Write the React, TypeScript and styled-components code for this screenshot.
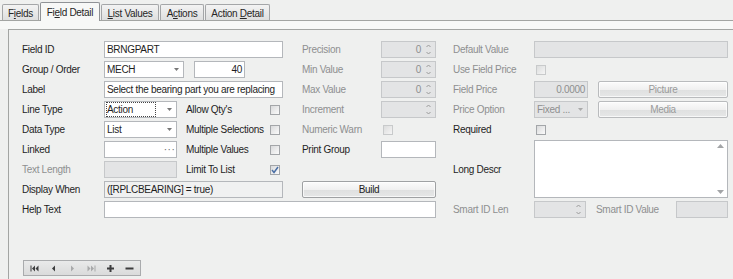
import styled, { createGlobalStyle } from "styled-components";

const GlobalStyle = createGlobalStyle`
  html, body { margin: 0; padding: 0; }
  body {
    background: #eff0ef;
    font-family: "Liberation Sans", Arial, sans-serif;
    font-size: 10px;
    letter-spacing: -0.3px;
    color: #1e1e1e;
  }
`;

const Window = styled.div`
  width: 733px;
  height: 279px;
  overflow: hidden;
  display: flex;
  flex-direction: column;
`;

const TabBar = styled.div`
  height: 20px;
  flex: none;
  border-bottom: 1px solid #a2a4a2;
  display: flex;
  align-items: flex-end;
  padding-left: 2px;
  gap: 1px;
`;

const Tab = styled.div<{ $active?: boolean; $w: number }>`
  box-sizing: border-box;
  width: ${(p) => p.$w}px;
  height: ${(p) => (p.$active ? 19 : 16)}px;
  margin-bottom: ${(p) => (p.$active ? -1 : 0)}px;
  border: 1px solid ${(p) => (p.$active ? "#8f9296" : "#a4a6a8")};
  border-bottom: none;
  border-radius: 2px 2px 0 0;
  background: ${(p) =>
    p.$active ? "#f7f8f7" : "linear-gradient(#f3f3f3, #dedfdf)"};
  display: flex;
  align-items: center;
  justify-content: center;
  padding-top: ${(p) => (p.$active ? 0 : 1)}px;
  color: #262626;
  white-space: pre;
  u { text-decoration-thickness: 1px; text-underline-offset: 1px; }
`;

const Strip = styled.div`
  height: 8px;
  flex: none;
  background: #f7f8f7;
`;

const Panel = styled.div`
  flex: 1;
  margin-left: 8px;
  border-left: 1px solid #a3a5a3;
  border-top: 1px solid #a3a5a3;
  padding: 11px 0 0 13px;
  display: flex;
  flex-direction: column;
`;

const Form = styled.div`
  display: grid;
  grid-template-columns: 82px 73px 9px 82px 15px 19px 79px 55px 17px 81px 194px;
  grid-auto-rows: 17px;
  row-gap: 3px;
`;

const Label = styled.div<{ $dim?: boolean; $col?: string; $row?: string }>`
  grid-column: ${(p) => p.$col ?? "auto"};
  grid-row: ${(p) => p.$row ?? "auto"};
  display: flex;
  align-items: center;
  white-space: nowrap;
  color: ${(p) => (p.$dim ? "#8e8f8f" : "#1e1e1e")};
`;

const Cell = styled.div<{ $col: string; $row: string }>`
  grid-column: ${(p) => p.$col};
  grid-row: ${(p) => p.$row};
  display: flex;
  align-items: center;
  gap: 10px;
  min-width: 0;
`;

const Box = styled.div<{
  $dim?: boolean;
  $soft?: boolean;
  $right?: boolean;
  $w?: number;
}>`
  box-sizing: border-box;
  height: 17px;
  width: ${(p) => (p.$w ? `${p.$w}px` : "100%")};
  flex: none;
  border: 1px solid ${(p) => (p.$dim ? "#c6c8ca" : "#b4b7bb")};
  background: ${(p) => (p.$dim ? "#e3e4e5" : p.$soft ? "#f0f1f1" : "#ffffff")};
  color: ${(p) => (p.$dim ? "#8e8f8f" : "#1e1e1e")};
  display: flex;
  align-items: center;
  justify-content: ${(p) => (p.$right ? "flex-end" : "flex-start")};
  padding: 0 2px;
  white-space: nowrap;
  overflow: hidden;
`;

const BoxText = styled.span<{ $right?: boolean }>`
  flex: 1;
  min-width: 0;
  text-align: ${(p) => (p.$right ? "right" : "left")};
  padding-right: ${(p) => (p.$right ? 3 : 0)}px;
`;

const Focus = styled.span`
  flex: 1;
  align-self: stretch;
  margin: 1px 10px 1px 0;
  outline: 1px dotted #444;
  display: flex;
  align-items: center;
`;

const Edge = styled.span`
  width: 9px;
  flex: none;
  display: flex;
  align-items: center;
  justify-content: center;
  color: #666;
  letter-spacing: 0.5px;
`;

const Check = styled.div<{ $dim?: boolean }>`
  box-sizing: border-box;
  width: 10px;
  height: 10px;
  margin-left: 2px;
  border: 1px solid ${(p) => (p.$dim ? "#c8cacb" : "#a3a6a9")};
  background: ${(p) =>
    p.$dim ? "linear-gradient(135deg, #dcdddd, #f5f5f5)" : "linear-gradient(135deg, #d9dadb, #fbfbfb)"};
  display: flex;
  align-items: center;
  justify-content: center;
`;

const Btn = styled.div<{ $dim?: boolean; $col?: string; $row?: string }>`
  grid-column: ${(p) => p.$col ?? "auto"};
  grid-row: ${(p) => p.$row ?? "auto"};
  box-sizing: border-box;
  flex: 1;
  height: 17px;
  border: 1px solid ${(p) => (p.$dim ? "#b9bbbd" : "#9fa1a3")};
  border-radius: 2px;
  background: linear-gradient(#fbfbfb 0%, #f0f0f0 50%, #dfe0e0 51%, #e6e7e7 100%);
  box-shadow: inset 0 0 0 1px rgba(255, 255, 255, 0.7);
  color: ${(p) => (p.$dim ? "#9a9b9b" : "#1e1e1e")};
  display: flex;
  align-items: center;
  justify-content: center;
`;

const Memo = styled.div`
  grid-column: 11;
  grid-row: 6 / 9;
  box-sizing: border-box;
  margin-top: -1px;
  height: 58px;
  border: 1px solid #b4b7bb;
  background: #fff;
  display: flex;
  justify-content: flex-end;
`;

const ScrollBar = styled.div`
  width: 13px;
  display: flex;
  flex-direction: column;
  justify-content: space-between;
  align-items: center;
  padding: 3px 0;
`;

const Navigator = styled.div`
  margin: 42px 0 0 1px;
  box-sizing: border-box;
  width: 118px;
  height: 16px;
  border: 1px solid #a9abad;
  background: linear-gradient(#e9eaea, #dadbdb);
  display: flex;
  align-items: center;
  padding-left: 1px;
`;

const NavBtn = styled.div`
  width: 19px;
  height: 14px;
  display: flex;
  align-items: center;
  justify-content: center;
`;

const Caret = ({ dim }: { dim?: boolean }) => (
  <svg width="5" height="3" viewBox="0 0 5 3">
    <path d="M0 0H5L2.5 3Z" fill={dim ? "#aaa" : "#777"} />
  </svg>
);

const SpinArrows = () => (
  <svg width="5" height="13" viewBox="0 0 5 13">
    <path d="M0.5 4L2.5 2L4.5 4" fill="none" stroke="#9a9a9a" strokeWidth="1" />
    <path d="M0.5 9L2.5 11L4.5 9" fill="none" stroke="#9a9a9a" strokeWidth="1" />
  </svg>
);

const Spin = ({ value, w }: { value?: string; w?: number }) => (
  <Box $dim $w={w}>
    <BoxText $right>{value}</BoxText>
    <Edge>
      <SpinArrows />
    </Edge>
  </Box>
);

const Combo = ({ value, w, dim, focus }: { value: string; w?: number; dim?: boolean; focus?: boolean }) => (
  <Box $w={w} $dim={dim}>
    {focus ? <Focus>{value}</Focus> : <BoxText>{value}</BoxText>}
    <Edge>
      <Caret dim={dim} />
    </Edge>
  </Box>
);

const Tick = () => (
  <svg width="8" height="8" viewBox="0 0 8 8">
    <path d="M1 4L3 6.5L7 1" fill="none" stroke="#4a6fa5" strokeWidth="1.5" />
  </svg>
);

const Nav = ({ kind, dim }: { kind: string; dim?: boolean }) => {
  const c = dim ? "#a8a9aa" : "#3c3d3e";
  return (
    <NavBtn>
      <svg width="9" height="7" viewBox="0 0 9 7">
        {kind === "first" && (
          <>
            <rect x="0.5" y="0.5" width="1" height="6" fill={c} />
            <path d="M5 0.5V6.5L2 3.5Z M8.5 0.5V6.5L5.5 3.5Z" fill={c} />
          </>
        )}
        {kind === "prev" && <path d="M6 0.5V6.5L3 3.5Z" fill={c} />}
        {kind === "next" && <path d="M3 0.5V6.5L6 3.5Z" fill={c} />}
        {kind === "last" && (
          <>
            <path d="M0.5 0.5V6.5L3.5 3.5Z M4 0.5V6.5L7 3.5Z" fill={c} />
            <rect x="7.5" y="0.5" width="1" height="6" fill={c} />
          </>
        )}
        {kind === "add" && <path d="M3.5 0H5.5V2.5H8V4.5H5.5V7H3.5V4.5H1V2.5H3.5Z" fill={c} />}
        {kind === "del" && <rect x="0.5" y="2.5" width="8" height="2" fill={c} />}
      </svg>
    </NavBtn>
  );
};

export default function App() {
  return (
    <Window>
      <GlobalStyle />
      <TabBar>
        <Tab $w={37}>
          F<u>i</u>elds
        </Tab>
        <Tab $w={60} $active>
          Fi<u>e</u>ld{" "}Detail
        </Tab>
        <Tab $w={58}>
          <u>L</u>ist{" "}Values
        </Tab>
        <Tab $w={44}>
          A<u>c</u>tions
        </Tab>
        <Tab $w={65}>
          {"Action "}
          <u>D</u>etail
        </Tab>
      </TabBar>
      <Strip />
      <Panel>
        <Form>
          {/* row 1 */}
          <Label $col="1" $row="1">Field ID</Label>
          <Cell $col="2 / 6" $row="1">
            <Box>BRNGPART</Box>
          </Cell>
          <Label $dim $col="7" $row="1">Precision</Label>
          <Cell $col="8" $row="1">
            <Spin value="0" />
          </Cell>
          <Label $dim $col="10" $row="1">Default Value</Label>
          <Cell $col="11" $row="1">
            <Box $dim />
          </Cell>

          {/* row 2 */}
          <Label $col="1" $row="2">Group / Order</Label>
          <Cell $col="2 / 6" $row="2">
            <Combo value="MECH" w={80} />
            <Box $w={51} $right>40</Box>
          </Cell>
          <Label $dim $col="7" $row="2">Min Value</Label>
          <Cell $col="8" $row="2">
            <Spin value="0" />
          </Cell>
          <Label $dim $col="10" $row="2">Use Field Price</Label>
          <Cell $col="11" $row="2">
            <Check $dim />
          </Cell>

          {/* row 3 */}
          <Label $col="1" $row="3">Label</Label>
          <Cell $col="2 / 6" $row="3">
            <Box>Select the bearing part you are replacing</Box>
          </Cell>
          <Label $dim $col="7" $row="3">Max Value</Label>
          <Cell $col="8" $row="3">
            <Spin value="0" />
          </Cell>
          <Label $dim $col="10" $row="3">Field Price</Label>
          <Cell $col="11" $row="3">
            <Box $dim $right $w={54}>0.0000</Box>
            <Btn $dim>Picture</Btn>
          </Cell>

          {/* row 4 */}
          <Label $col="1" $row="4">Line Type</Label>
          <Cell $col="2" $row="4">
            <Combo value="Action" focus />
          </Cell>
          <Label $col="4" $row="4">Allow Qty's</Label>
          <Cell $col="5" $row="4">
            <Check />
          </Cell>
          <Label $dim $col="7" $row="4">Increment</Label>
          <Cell $col="8" $row="4">
            <Spin />
          </Cell>
          <Label $dim $col="10" $row="4">Price Option</Label>
          <Cell $col="11" $row="4">
            <Combo value="Fixed ..." w={54} dim />
            <Btn $dim>Media</Btn>
          </Cell>

          {/* row 5 */}
          <Label $col="1" $row="5">Data Type</Label>
          <Cell $col="2" $row="5">
            <Combo value="List" />
          </Cell>
          <Label $col="4" $row="5">Multiple Selections</Label>
          <Cell $col="5" $row="5">
            <Check />
          </Cell>
          <Label $dim $col="7" $row="5">Numeric Warn</Label>
          <Cell $col="8" $row="5">
            <Check $dim />
          </Cell>
          <Label $col="10" $row="5">Required</Label>
          <Cell $col="11" $row="5">
            <Check />
          </Cell>

          {/* row 6 */}
          <Label $col="1" $row="6">Linked</Label>
          <Cell $col="2" $row="6">
            <Box>
              <BoxText />
              <Edge>···</Edge>
            </Box>
          </Cell>
          <Label $col="4" $row="6">Multiple Values</Label>
          <Cell $col="5" $row="6">
            <Check />
          </Cell>
          <Label $col="7" $row="6">Print Group</Label>
          <Cell $col="8" $row="6">
            <Box />
          </Cell>
          <Label $col="10" $row="6 / 9">Long Descr</Label>
          <Memo>
            <ScrollBar>
              <svg width="7" height="4" viewBox="0 0 7 4">
                <path d="M0 4H7L3.5 0Z" fill="#a3a5a7" />
              </svg>
              <svg width="7" height="4" viewBox="0 0 7 4">
                <path d="M0 0H7L3.5 4Z" fill="#a3a5a7" />
              </svg>
            </ScrollBar>
          </Memo>

          {/* row 7 */}
          <Label $dim $col="1" $row="7">Text Length</Label>
          <Cell $col="2" $row="7">
            <Box $dim />
          </Cell>
          <Label $col="4" $row="7">Limit To List</Label>
          <Cell $col="5" $row="7">
            <Check>
              <Tick />
            </Check>
          </Cell>

          {/* row 8 */}
          <Label $col="1" $row="8">Display When</Label>
          <Cell $col="2 / 6" $row="8">
            <Box $soft>([RPLCBEARING] = true)</Box>
          </Cell>
          <Btn $col="7 / 9" $row="8">Build</Btn>

          {/* row 9 */}
          <Label $col="1" $row="9">Help Text</Label>
          <Cell $col="2 / 9" $row="9">
            <Box />
          </Cell>
          <Label $dim $col="10" $row="9">Smart ID Len</Label>
          <Cell $col="11" $row="9">
            <Spin w={52} />
            <Label $dim>Smart ID Value</Label>
            <Box $dim $w={52} style={{ marginLeft: "auto" }} />
          </Cell>
        </Form>
        <Navigator>
          <Nav kind="first" />
          <Nav kind="prev" />
          <Nav kind="next" dim />
          <Nav kind="last" dim />
          <Nav kind="add" />
          <Nav kind="del" />
        </Navigator>
      </Panel>
    </Window>
  );
}
